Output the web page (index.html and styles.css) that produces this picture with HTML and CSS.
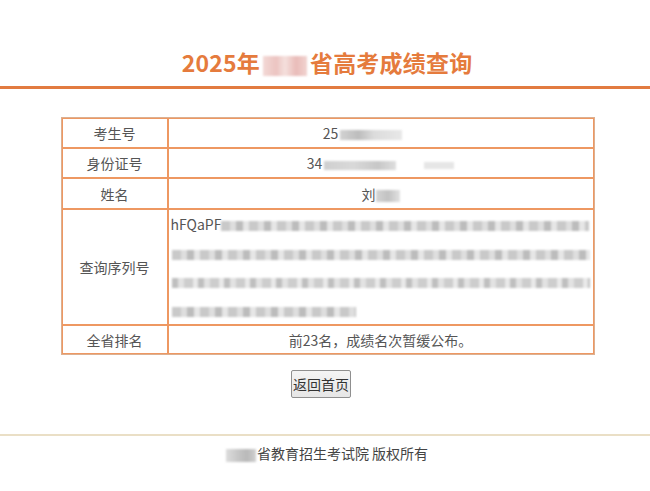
FILE: index.html
```html
<!DOCTYPE html>
<html lang="zh-CN">
<head>
<meta charset="utf-8">
<title>2025年高考成绩查询</title>
<link rel="stylesheet" href="styles.css">
</head>
<body>
<div class="header">
  <h1 class="title">2025年<span class="mask mask-title"></span>省高考成绩查询</h1>
</div>
<div class="main">
  <table class="result">
    <tr class="row-a">
      <td class="label">考生号</td>
      <td class="value">25<span class="mask mask-a"></span><span class="gap-a"></span></td>
    </tr>
    <tr class="row-a">
      <td class="label">身份证号</td>
      <td class="value">34<span class="mask mask-b"></span><span class="mask mask-b2"></span></td>
    </tr>
    <tr class="row-b">
      <td class="label">姓名</td>
      <td class="value">刘<span class="mask mask-c"></span></td>
    </tr>
    <tr class="row-q">
      <td class="label">查询序列号</td>
      <td class="serial">
        <div class="sline">hFQaPF<span class="mask mask-l1"></span></div>
        <div class="sline"><span class="mask mask-full"></span></div>
        <div class="sline"><span class="mask mask-full alt"></span></div>
        <div class="sline"><span class="mask mask-l4"></span></div>
      </td>
    </tr>
    <tr class="row-c">
      <td class="label">全省排名</td>
      <td class="value">前23名，成绩名次暂缓公布。</td>
    </tr>
  </table>
  <div class="actions">
    <button class="back" type="button">返回首页</button>
  </div>
</div>
<div class="footer">
  <span class="mask mask-foot"></span>省教育招生考试院 版权所有
</div>
</body>
</html>
```
FILE: styles.css
```css
html, body {
  margin: 0;
  padding: 0;
  background: #ffffff;
}
body {
  font-family: "Noto Sans CJK SC", "Noto Sans", sans-serif;
  color: #444;
}
.header {
  padding: 47px 0 9px 4px;
  border-bottom: 3px solid #e27b40;
}
.title {
  margin: 0;
  text-align: center;
  font-size: 23px;
  line-height: 30px;
  font-weight: 700;
  color: #e57b3d;
  letter-spacing: 0.2px;
}
.mask {
  display: inline-block;
  vertical-align: middle;
  filter: blur(1.2px);
}
.mask-title {
  width: 44px;
  height: 20px;
  margin: 0 3px;
  background: linear-gradient(90deg, #f3d9d6 0%, #ecc4c1 30%, #f5e0dd 50%, #e9bcb9 75%, #f1d3d0 100%);
}
.main {
  padding-left: 5px;
}
.result {
  margin: 28px auto 0;
  width: 534px;
  border-collapse: separate;
  border-spacing: 0;
  border: 1px solid #dcb091;
  font-size: 14px;
  color: #555;
}
.result td {
  border: 1px solid #ee9862;
  padding: 0;
  text-align: center;
}
.result td.label {
  width: 104px;
}
.row-a td { height: 28px; }
.row-b td { height: 29px; }
.row-q td { height: 114px; }
.row-c td { height: 27px; }
.value {
  line-height: 20px;
}
.mask-a {
  width: 62px;
  height: 10px;
  margin-left: 2px;
  background: linear-gradient(90deg, #d2d2d2 0%, #bdbdbd 30%, #dcdcdc 55%, #e8e8e8 100%);
}
.gap-a {
  display: inline-block;
  width: 36px;
}
.mask-b {
  width: 72px;
  height: 9px;
  margin-left: 2px;
  background: linear-gradient(90deg, #cfcfcf 0%, #d9d9d9 40%, #c7c7c7 75%, #dedede 100%);
}
.mask-b2 {
  width: 30px;
  height: 7px;
  margin-left: 28px;
  background: #e6e6e6;
}
.mask-c {
  width: 24px;
  height: 12px;
  background: linear-gradient(90deg, #d4d4d4, #c2c2c2 50%, #e2e2e2);
}
.serial {
  text-align: left !important;
  vertical-align: top;
  padding-left: 2px !important;
}
.sline {
  height: 28.5px;
  line-height: 28px;
  font-size: 14px;
  color: #555;
  white-space: nowrap;
}
.mask-l1,
.mask-full,
.mask-l4 {
  height: 10px;
  background: repeating-linear-gradient(90deg, #c9c9c9 0 9px, #dedede 9px 15px, #bcbcbc 15px 22px, #e6e6e6 22px 28px);
}
.mask-l1 {
  width: 368px;
}
.mask-full {
  width: 418px;
  margin-left: 1px;
}
.mask-full.alt {
  background: repeating-linear-gradient(90deg, #bfbfbf 0 6px, #e2e2e2 6px 12px, #cdcdcd 12px 21px, #e9e9e9 21px 26px);
}
.mask-l4 {
  width: 184px;
  margin-left: 1px;
}
.actions {
  text-align: center;
  padding-top: 15px;
  padding-right: 13px;
}
.back {
  font-family: "Noto Sans CJK SC", sans-serif;
  font-size: 14px;
  line-height: 20px;
  height: 28px;
  width: 60px;
  padding: 0;
  color: #333;
  background: linear-gradient(#f4f4f4, #e6e6e6);
  border: 1px solid #8f8f8f;
  border-radius: 2px;
}
.footer {
  margin-top: 36px;
  border-top: 2px solid #eadfc6;
  padding: 6px 0 0 4px;
  text-align: center;
  font-size: 14px;
  line-height: 22px;
  color: #444;
}
.mask-foot {
  width: 30px;
  height: 13px;
  margin-right: 1px;
  background: linear-gradient(90deg, #dcdcdc, #c4c4c4 45%, #b9b9b9 70%, #d0d0d0);
}
```
